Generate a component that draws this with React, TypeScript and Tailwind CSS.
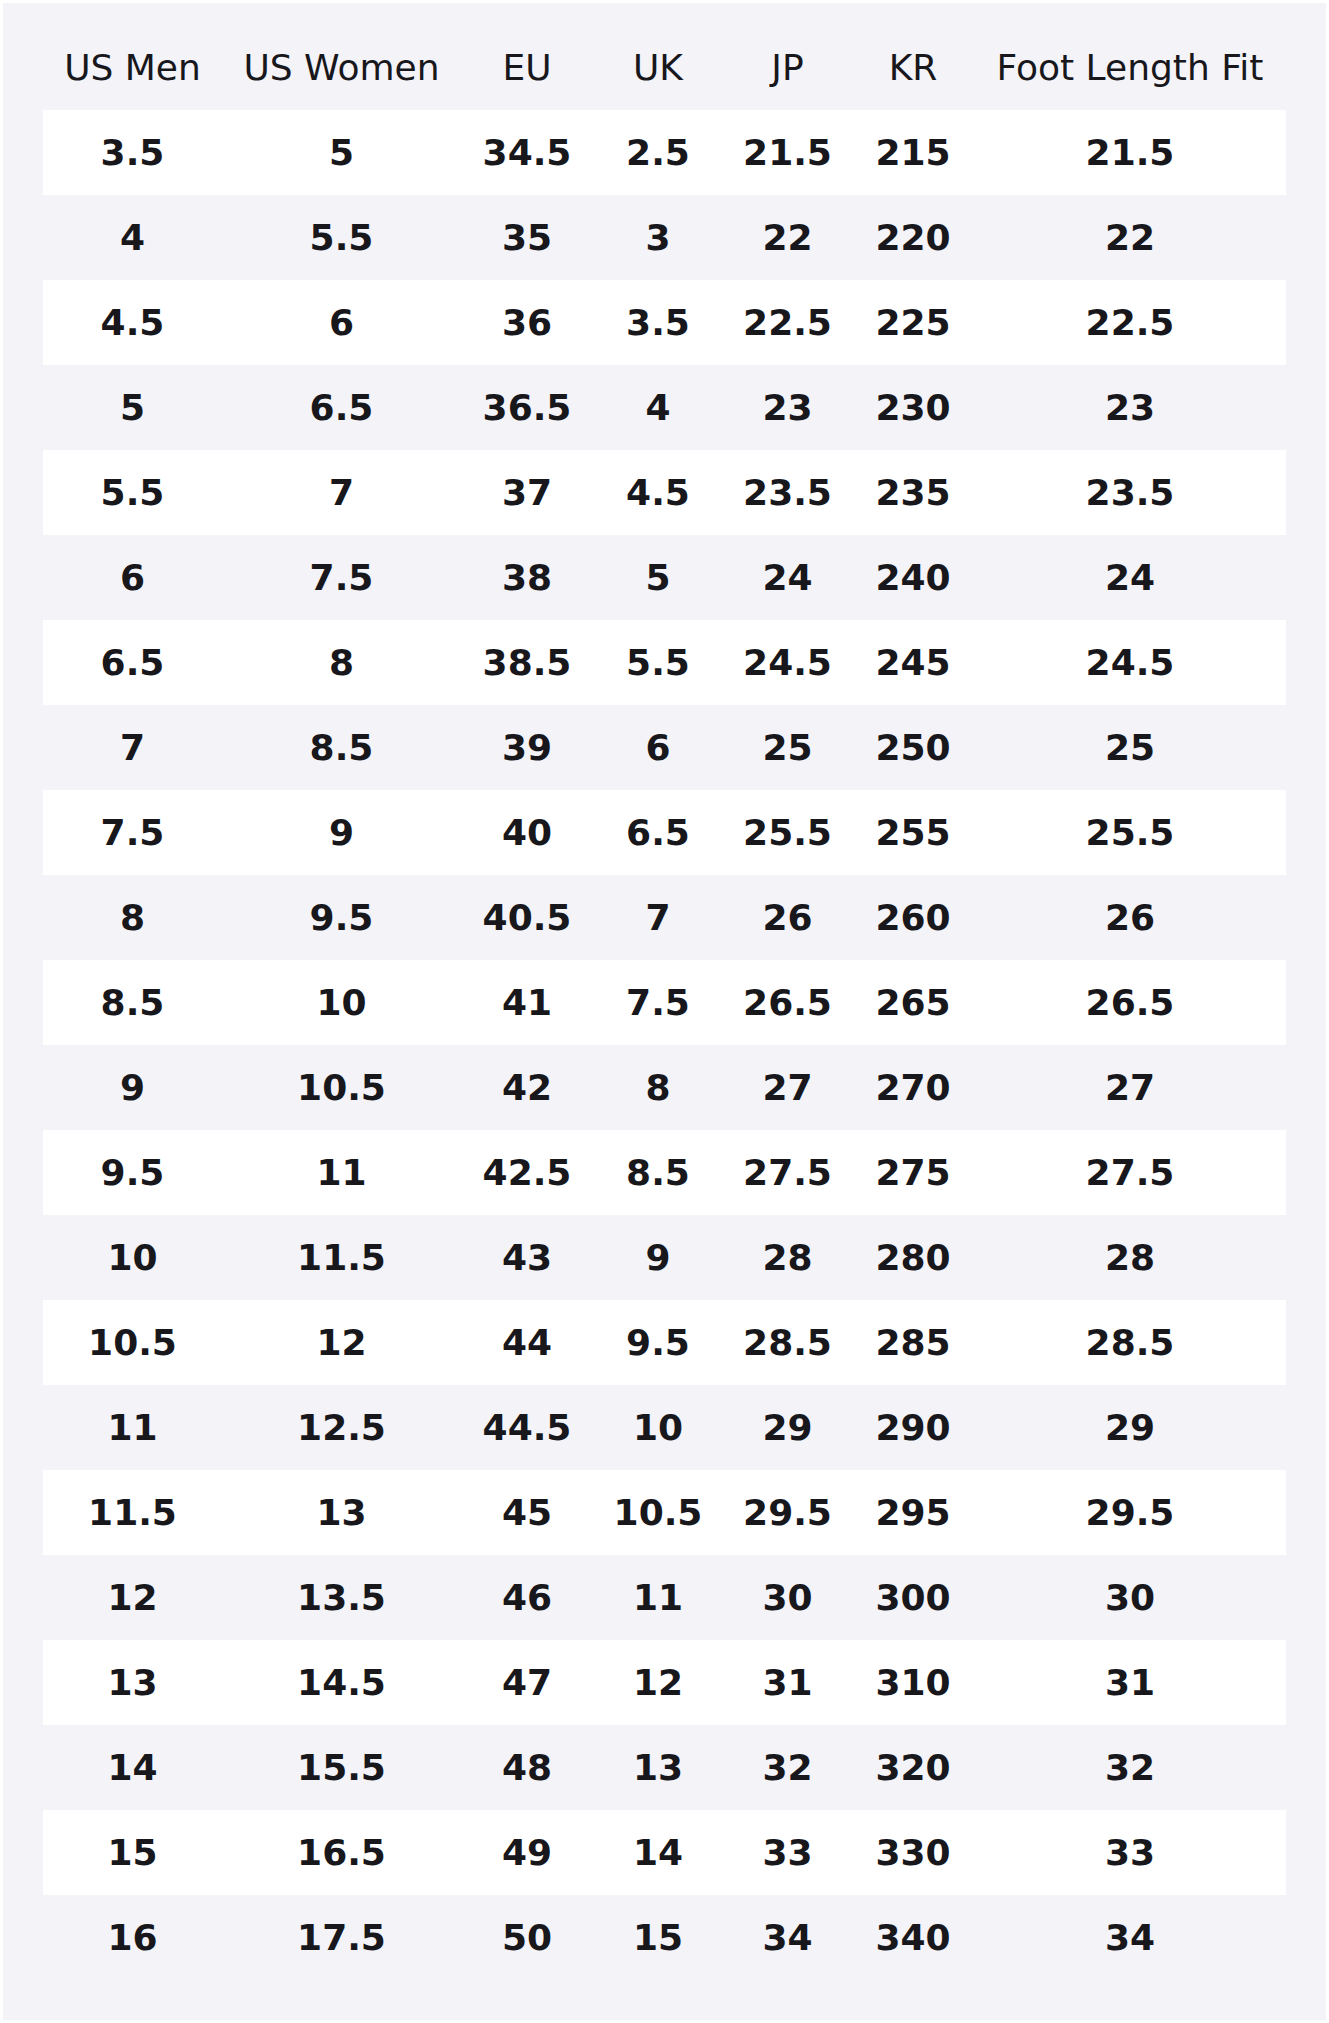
import React from "react";

const headers = ["US Men", "US Women", "EU", "UK", "JP", "KR", "Foot Length Fit"];

const rows: string[][] = [
  ["3.5", "5", "34.5", "2.5", "21.5", "215", "21.5"],
  ["4", "5.5", "35", "3", "22", "220", "22"],
  ["4.5", "6", "36", "3.5", "22.5", "225", "22.5"],
  ["5", "6.5", "36.5", "4", "23", "230", "23"],
  ["5.5", "7", "37", "4.5", "23.5", "235", "23.5"],
  ["6", "7.5", "38", "5", "24", "240", "24"],
  ["6.5", "8", "38.5", "5.5", "24.5", "245", "24.5"],
  ["7", "8.5", "39", "6", "25", "250", "25"],
  ["7.5", "9", "40", "6.5", "25.5", "255", "25.5"],
  ["8", "9.5", "40.5", "7", "26", "260", "26"],
  ["8.5", "10", "41", "7.5", "26.5", "265", "26.5"],
  ["9", "10.5", "42", "8", "27", "270", "27"],
  ["9.5", "11", "42.5", "8.5", "27.5", "275", "27.5"],
  ["10", "11.5", "43", "9", "28", "280", "28"],
  ["10.5", "12", "44", "9.5", "28.5", "285", "28.5"],
  ["11", "12.5", "44.5", "10", "29", "290", "29"],
  ["11.5", "13", "45", "10.5", "29.5", "295", "29.5"],
  ["12", "13.5", "46", "11", "30", "300", "30"],
  ["13", "14.5", "47", "12", "31", "310", "31"],
  ["14", "15.5", "48", "13", "32", "320", "32"],
  ["15", "16.5", "49", "14", "33", "330", "33"],
  ["16", "17.5", "50", "15", "34", "340", "34"],
];

const gridCols = "grid grid-cols-[179px_239px_132px_130px_129px_122px_312px]";

export default function App() {
  return (
    <div className="bg-white p-[3px] min-h-[2023px]" style={{ fontFamily: '"DejaVu Sans", Verdana, sans-serif' }}>
      <div className="bg-[#f3f3f8] px-[40px] pt-[22px] pb-[40px] text-[#17171c]">
        <div className={`${gridCols} h-[85px] items-center text-[36px] font-normal`}>
          {headers.map((h) => (
            <div key={h} className="text-center whitespace-nowrap">
              {h}
            </div>
          ))}
        </div>
        {rows.map((r, i) => (
          <div
            key={i}
            className={`${gridCols} h-[85px] items-center text-[36px] font-bold ${
              i % 2 === 0 ? "bg-white" : "bg-transparent"
            }`}
          >
            {r.map((v, j) => (
              <div key={j} className="text-center whitespace-nowrap">
                {v}
              </div>
            ))}
          </div>
        ))}
      </div>
    </div>
  );
}
